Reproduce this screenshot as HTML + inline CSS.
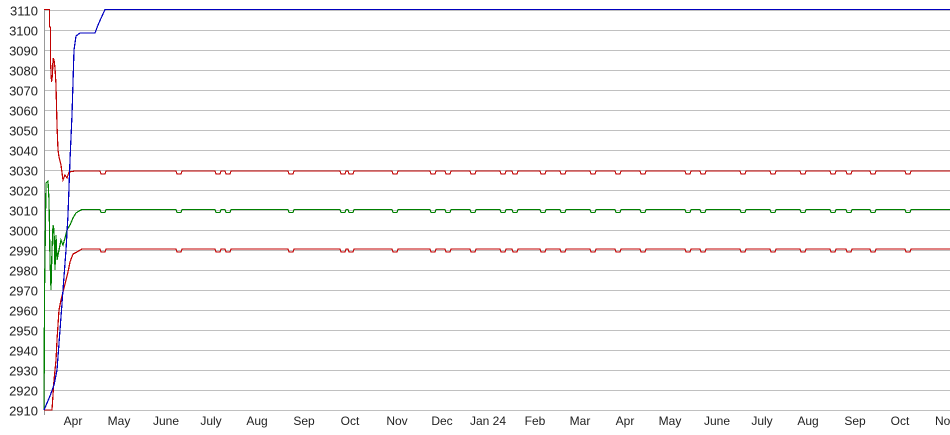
<!DOCTYPE html>
<html><head><meta charset="utf-8"><style>
html,body{margin:0;padding:0;background:#fff;}
svg{display:block;}
text{font-family:"Liberation Sans",Arial,sans-serif;fill:#222;}
</style></head><body>
<svg id="s" width="950" height="435" viewBox="0 0 950 435" xmlns="http://www.w3.org/2000/svg">
<g id="grid" stroke="#c0c0c0" stroke-width="1"></g>
<line x1="44.5" y1="9" x2="44.5" y2="415" stroke="#999" stroke-width="1"/>
<g id="ylab" font-size="13" text-anchor="end"></g>
<g font-size="12" text-anchor="middle">
<text x="73" y="425">Apr</text><text x="119" y="425">May</text><text x="166" y="425">June</text>
<text x="211" y="425">July</text><text x="257" y="425">Aug</text><text x="304" y="425">Sep</text>
<text x="350" y="425">Oct</text><text x="397" y="425">Nov</text><text x="442" y="425">Dec</text>
<text x="488" y="425">Jan 24</text><text x="535" y="425">Feb</text><text x="580" y="425">Mar</text>
<text x="625" y="425">Apr</text><text x="670" y="425">May</text><text x="717" y="425">June</text>
<text x="762" y="425">July</text><text x="808" y="425">Aug</text><text x="855" y="425">Sep</text>
<text x="900" y="425">Oct</text><text x="935" y="425" text-anchor="start">No</text>
</g>
<g fill="none" stroke-width="1.2" shape-rendering="crispEdges">
<path id="r1" stroke="#c00000" d=""/>
<path id="g1" stroke="#008000" d=""/>
<path id="r2" stroke="#c00000" d=""/>
<path stroke="#0000c0" d="M44,410 L50,396 L54,385 L57,370 L60,330 L63,290 L66,250 L68,215 L70,160 L72,115 L74,50 L76,36 L80,33 L95,33 L98,25 L105,9.5 L950,9.5"/>
</g>
</svg>
<script>
var g=document.getElementById('grid'),yl=document.getElementById('ylab'),ns='http://www.w3.org/2000/svg';
for(var i=0;i<=20;i++){var y=10+i*20+0.5;var l=document.createElementNS(ns,'line');l.setAttribute('x1',44);l.setAttribute('x2',950);l.setAttribute('y1',y);l.setAttribute('y2',y);g.appendChild(l);
var t=document.createElementNS(ns,'text');t.setAttribute('x',38);t.setAttribute('y',y+5);t.textContent=3110-i*10;yl.appendChild(t);}
var dips=[100,176,215,225,288,340,348,392,430,445,470,500,512,540,560,590,615,640,685,700,740,770,800,830,846,870,905];
function flat(x0,y){var d='';dips.forEach(function(dx){if(dx<=x0+2)return;d+=' L'+dx+','+y+' L'+(dx+1)+','+(y+3)+' L'+(dx+5)+','+(y+3)+' L'+(dx+6)+','+y;});return d+' L950,'+y;}
document.getElementById('r1').setAttribute('d','M44,9.5 L49.5,9.5 L49.5,27 L50.5,27 L50.5,62 L51.5,82 L52.5,75 L53,58 L54,60 L55,68 L56,85 L57,125 L58,150 L59,157 L61,165 L63,180 L65,175 L67,178 L69,172 L75,171'+flat(75,171));
document.getElementById('g1').setAttribute('d','M44,410 L44.5,295 L46,183 L48,181 L49,200 L50,260 L51,290 L52,250 L53,225 L54,230 L55,270 L56,235 L57,260 L59,250 L61,240 L63,245 L65,238 L67,230 L70,225 L73,218 L76,213 L79,211 L82,209.5'+flat(82,209.5));
document.getElementById('r2').setAttribute('d','M44,410 L52,410 L53,395 L54,380 L56,360 L57,340 L59,310 L61,300 L63,292 L66,280 L68,272 L70,262 L73,254 L77,252 L82,249'+flat(82,249));
</script>
</body></html>
